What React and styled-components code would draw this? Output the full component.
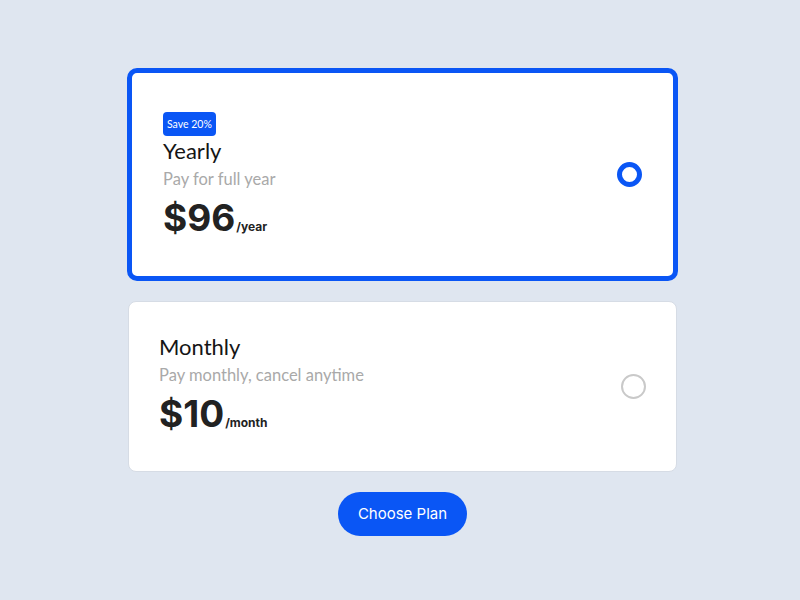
import React, { useState } from 'react';
import styled, { createGlobalStyle } from 'styled-components';

const GlobalStyle = createGlobalStyle`
  html, body {
    margin: 0;
    padding: 0;
    background: #dfe6f0;
  }
  * { box-sizing: border-box; }
`;

const Page = styled.div`
  width: 800px;
  height: 600px;
  display: flex;
  flex-direction: column;
  align-items: center;
  justify-content: center;
  gap: 20px;
  padding-left: 5px;
  padding-top: 3px;
`;

const Card = styled.div`
  width: ${props => (props.selected ? '551px' : '549px')};
  background: #fff;
  border: ${props => (props.selected ? '5px solid #0a56f5' : '1px solid #d6dce5')};
  border-radius: ${props => (props.selected ? '10px' : '8px')};
  padding: ${props => (props.selected ? '31px' : '30px')};
  display: flex;
  align-items: center;
  justify-content: space-between;
  cursor: pointer;
`;

const Info = styled.div`
  display: flex;
  flex-direction: column;
  align-items: flex-start;
`;

const Badge = styled.span`
  margin-top: 8px;
  background: #0a56f5;
  color: #fff;
  font-family: Lato, "Liberation Sans", sans-serif;
  font-size: 10.5px;
  line-height: 24px;
  padding: 0 4px;
  border-radius: 4px;
`;

const Title = styled.div`
  font-family: Lato, "Liberation Sans", sans-serif;
  font-size: 22px;
  line-height: 30px;
  color: #151515;
`;

const Subtitle = styled.div`
  font-family: Lato, "Liberation Sans", sans-serif;
  font-size: 16.5px;
  line-height: 20px;
  color: #a9a9a9;
  margin-top: 3px;
`;

const Price = styled.div`
  font-family: Inter, "Liberation Sans", sans-serif;
  font-weight: 700;
  font-size: 37px;
  line-height: 36px;
  color: #222;
  margin-top: 11px;
  display: flex;
  align-items: baseline;
`;

const Period = styled.span`
  font-size: 12px;
  font-weight: 700;
  margin-left: 1px;
`;

const Radio = styled.span`
  width: 25px;
  height: 25px;
  border-radius: 50%;
  flex-shrink: 0;
  border: ${props => (props.checked ? '5px solid #0a56f5' : '2px solid #c9c9c9')};
  background: #fff;
`;

const Button = styled.button`
  height: 44px;
  padding: 0 20px;
  border: none;
  border-radius: 22px;
  background: #0a56f5;
  color: #fff;
  font-family: Inter, "Liberation Sans", sans-serif;
  font-size: 15px;
  cursor: pointer;
`;

const plans = [
  { id: 'yearly', name: 'Yearly', desc: 'Pay for full year', price: '$96', period: '/year', badge: 'Save 20%' },
  { id: 'monthly', name: 'Monthly', desc: 'Pay monthly, cancel anytime', price: '$10', period: '/month' },
];

export default function App() {
  const [selected, setSelected] = useState('yearly');
  return (
    <>
      <GlobalStyle />
      <Page>
        {plans.map(plan => (
          <Card key={plan.id} selected={selected === plan.id} onClick={() => setSelected(plan.id)}>
            <Info>
              {plan.badge && <Badge>{plan.badge}</Badge>}
              <Title>{plan.name}</Title>
              <Subtitle>{plan.desc}</Subtitle>
              <Price>
                {plan.price}
                <Period>{plan.period}</Period>
              </Price>
            </Info>
            <Radio checked={selected === plan.id} />
          </Card>
        ))}
        <Button>Choose Plan</Button>
      </Page>
    </>
  );
}
